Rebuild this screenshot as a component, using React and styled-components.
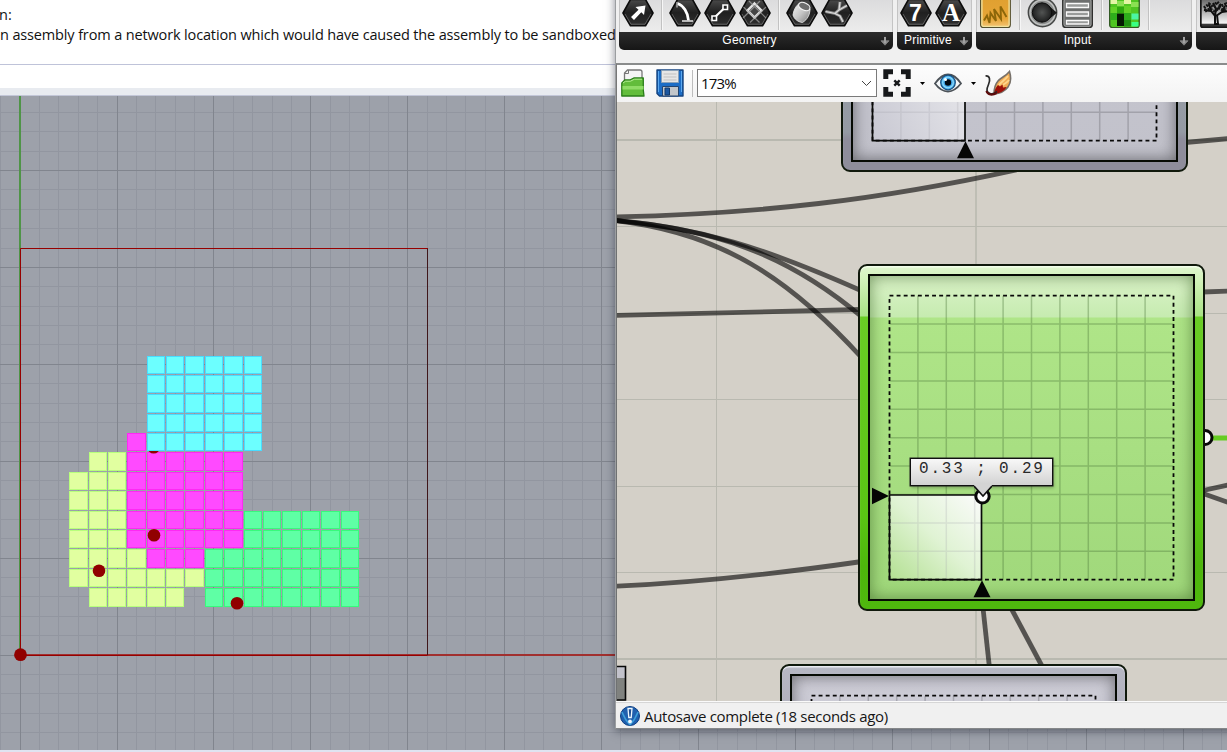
import React from "react";
import styled, { createGlobalStyle, css } from "styled-components";

const Global = createGlobalStyle`
  html, body { margin: 0; padding: 0; }
  body { width: 1227px; height: 752px; overflow: hidden; background: #e8ebf0; }
  svg { display: block; }
`;

const uiFont = css`
  font-family: "Open Sans", "Noto Sans", sans-serif;
`;

const Desktop = styled.div`
  position: relative;
  width: 1227px;
  height: 752px;
  overflow: hidden;
`;

/* ---------- modelling application in the back ---------- */

const Modeller = styled.div`
  display: flex;
  flex-direction: column;
  height: 752px;
`;

const History = styled.div`
  ${uiFont}
  box-sizing: border-box;
  height: 65px;
  padding-top: 5px;
  background: #fff;
  border-bottom: 1px solid #bfc3d9;
  color: #111;
  font-size: 14.5px;
  line-height: 20px;
`;

const HistoryLine = styled.div`
  white-space: nowrap;
  letter-spacing: ${(p) => p.$track || "0"};
  margin-left: ${(p) => p.$shift || "0"};
`;

const CommandLine = styled.div`
  height: 23px;
  background: #fff;
`;

const Splitter = styled.div`
  box-sizing: border-box;
  height: 8px;
  background: #e8ebf0;
  border-bottom: 1px solid #c3c7d8;
`;

const Viewport = styled.div`
  height: 654px;
  overflow: hidden;
  background: #9da1aa;
`;

const BottomEdge = styled.div`
  height: 2px;
  background: #dfe4f1;
`;

const ORIGIN_X = 20.2;
const ORIGIN_Y = 655;
const STEP = 19.38;
const VIEW_TOP = 96;

const colEdges = [69, 89, 108, 127, 147, 166, 185, 205, 224, 244, 263, 282, 302, 321, 341, 360];
const rowEdges = [356, 375, 394, 414, 433, 452, 472, 491, 511, 530, 549, 569, 588, 608];

const zones = [
  {
    fill: "#e1ffa0", edge: "#b8ff7c",
    runs: [[10, 4, 5], [9, 3, 5], [8, 3, 5], [7, 3, 5], [6, 3, 5], [5, 3, 6], [4, 3, 9], [3, 4, 8]],
  },
  {
    fill: "#ff4aff", edge: "#ff28f4",
    runs: [[11, 6, 6], [10, 6, 11], [9, 6, 11], [8, 6, 11], [7, 6, 11], [6, 6, 11], [5, 7, 9]],
  },
  {
    fill: "#5fffa5", edge: "#38fa7c",
    runs: [[7, 12, 17], [6, 12, 17], [5, 10, 17], [4, 10, 17], [3, 10, 17]],
  },
  {
    fill: "#6cffff", edge: "#48dcff",
    runs: [[15, 7, 12], [14, 7, 12], [13, 7, 12], [12, 7, 12], [11, 7, 12]],
  },
];

const range = (a, b) => Array.from({ length: b - a + 1 }, (_, k) => a + k);

function Zone({ fill, edge, runs }) {
  return (
    <g fill={fill} stroke={edge} strokeWidth="1">
      {runs.flatMap(([row, from, to]) =>
        range(from, to).map((col) => {
          const x = colEdges[col - 3];
          const y = rowEdges[15 - row];
          return (
            <rect
              key={row + "-" + col}
              x={x + 0.5}
              y={y + 0.5}
              width={colEdges[col - 2] - x - 2}
              height={rowEdges[16 - row] - y - 2}
            />
          );
        })
      )}
    </g>
  );
}

function Plan() {
  const gx = (k) => Math.floor(ORIGIN_X + STEP * k) + 0.5;
  const gy = (k) => Math.floor(ORIGIN_Y - STEP * k) + 0.5;
  const cols = range(-1, 62);
  const rows = range(-4, 28);
  const minor = (k) => k % 5 !== 0;
  const major = (k) => k % 5 === 0;
  const vline = (k) => `M${gx(k)} 96V750`;
  const hline = (k) => `M0 ${gy(k)}H1227`;
  return (
    <svg width="1227" height="654" viewBox={`0 ${VIEW_TOP} 1227 654`}>
      <path d={cols.filter(minor).map(vline).join("") + rows.filter(minor).map(hline).join("")} stroke="#9296a0" />
      <path d={cols.filter(major).map(vline).join("") + rows.filter(major).map(hline).join("")} stroke="#81858e" />
      <rect x="19" y="96" width="2" height="559" fill="#4f9447" />
      <rect x="20" y="654" width="620" height="2" fill="#a1302f" />
      <path d="M427.5 248V655" stroke="#5c0f12" />
      <path d="M427.5 248.500H20.500V655.500H427.500" fill="none" stroke="#960000" />
      <path d="M427.5 249V655" stroke="#2b1b20" strokeOpacity=".6" />
      {zones.slice(0, 3).map((z) => <Zone key={z.fill} {...z} />)}
      <circle cx="153.700" cy="447.300" r="6.300" fill="#910000" />
      <Zone {...zones[3]} />
      <g fill="#910000">
        <circle cx="20.500" cy="654.700" r="6.400" />
        <circle cx="154" cy="535.300" r="6.300" />
        <circle cx="99" cy="570.700" r="6.300" />
        <circle cx="237" cy="603.200" r="6.300" />
      </g>
    </svg>
  );
}

/* ---------- node editor window ---------- */

const EditorWindow = styled.div`
  position: absolute;
  left: 615px;
  top: -20px;
  box-sizing: border-box;
  width: 640px;
  height: 749px;
  border: 1px solid #858789;
  border-left-color: #9b9ea0;
  background: #f0f0f0;
  box-shadow: 0 2px 9px rgba(20, 25, 40, 0.5);
  display: flex;
  flex-direction: column;
`;

const Ribbon = styled.div`
  box-sizing: border-box;
  height: 82px;
  flex: none;
  padding: 0 0 0 3px;
  display: flex;
  gap: 4px;
`;

const Group = styled.div`
  width: ${(p) => p.$width}px;
  height: 69px;
  flex: none;
  display: flex;
  flex-direction: column;
  border-radius: 5px;
  overflow: hidden;
`;

const GroupBody = styled.div`
  box-sizing: border-box;
  height: 51px;
  padding: 17px 1px 0 ${(p) => p.$pad || 0}px;
  display: flex;
  background: linear-gradient(#d2d2d4, #ececec);
  border-left: 1px solid #c4c4c4;
  border-right: 1px solid #c4c4c4;
`;

const GroupLabel = styled.div`
  height: 18px;
  display: flex;
  align-items: center;
  justify-content: center;
  position: relative;
  background: linear-gradient(#2c2c2c, #161616);
  color: #fff;
  font: 12px/18px "Liberation Sans", Arial, sans-serif;
  letter-spacing: 0.2px;
  padding: 0 13px 2px 0;
  box-sizing: border-box;
`;

const Expand = styled.svg`
  position: absolute;
  right: 3px;
  top: 4px;
`;

const IconSlot = styled.div`
  width: 35px;
  flex: none;
  display: flex;
  justify-content: center;
`;

const Divider = styled.div`
  width: 12px;
  flex: none;
  display: flex;
  justify-content: center;
  &::before {
    content: "";
    width: 1px;
    height: 32px;
    background: #c2c2c2;
    box-shadow: 1px 0 #f6f6f6;
  }
`;

function Hex({ children }) {
  return (
    <svg width="32" height="30" viewBox="0 0 32 30">
      <defs>
        <linearGradient id="hexFill" x1="0" y1="0" x2="0" y2="1">
          <stop offset="0" stopColor="#4a4a4a" />
          <stop offset=".5" stopColor="#202020" />
          <stop offset="1" stopColor="#2f2f2f" />
        </linearGradient>
      </defs>
      <path d="M8.500 1.500h15L31 15l-7.500 12.800h-15L1 15z" fill="url(#hexFill)" stroke="#0c0c0c" strokeWidth="1.600" strokeLinejoin="round" />
      <path d="M3 16l6 10.200h14l6-10.200" fill="none" stroke="#777" strokeWidth=".7" />
      {children}
    </svg>
  );
}

const VectorIcon = () => (
  <Hex>
    <path d="M9 19l7.500-7.300-3-2.700L23.500 7.500 22 17l-2.700-2.800L12 22z" fill="#fff" />
  </Hex>
);
const ArcIcon = () => (
  <Hex>
    <path d="M8.500 5.500c6 2 10.500 9 11 17" fill="none" stroke="#fff" strokeWidth="2.800" />
    <path d="M13 23h11" stroke="#ddd" strokeWidth="1.600" />
    <path d="M8 4v5.500" stroke="#aaa" strokeWidth="1.500" />
  </Hex>
);
const LineIcon = () => (
  <Hex>
    <path d="M11 19l10-9.500" stroke="#fff" strokeWidth="2.200" />
    <path d="M8 18h4.500v4.500H8zM19 7h4.500v4.500H19z" fill="#222" stroke="#fff" strokeWidth="1.600" />
  </Hex>
);
const PatchIcon = () => (
  <Hex>
    <path d="M15.500 5.500l7 7-7 7-7-7z" fill="#444" stroke="#e4e4e4" strokeWidth="2.400" />
    <path d="M10 3l17 17M4.500 9l16 15.500M21 3L4 20M27 9L11 24.500" stroke="#aaa" strokeOpacity=".7" strokeWidth="1.200" />
  </Hex>
);
const BrepIcon = () => (
  <Hex>
    <defs>
      <linearGradient id="brepSide" x1="0" y1="0" x2="1" y2="1">
        <stop offset="0" stopColor="#f2f2f2" />
        <stop offset=".5" stopColor="#c6c6c6" />
        <stop offset="1" stopColor="#7c7c7c" />
      </linearGradient>
    </defs>
    <path d="M12.500 6C9 9 7.500 13 7 17c1 4 5 7 9.500 7.500 5-3 7.500-8 7.500-13.500z" fill="url(#brepSide)" stroke="#eee" strokeWidth=".8" />
    <ellipse cx="18.300" cy="8.500" rx="6" ry="3.600" transform="rotate(24 18.300 8.500)" fill="#6d6d6d" stroke="#f4f4f4" strokeWidth="1.200" />
  </Hex>
);
const MeshIcon = () => (
  <Hex>
    <path d="M4.500 13.500l9.500 2 4-3.500 1-8M18 12l8-4.500M14 15.500l5 2.500 3 6" fill="none" stroke="#8d8d8d" strokeWidth="3" />
    <path d="M4.500 13.500l9.500 2 4-3.500 1-8M18 12l8-4.500M14 15.500l5 2.500 3 6" fill="none" stroke="#dedede" strokeWidth="1.100" />
  </Hex>
);
const Glyph = styled.text`
  font: bold ${(p) => p.$size}px "${(p) => p.$face}", sans-serif;
  fill: #fff;
  text-anchor: middle;
`;

const TileSvg = (props) => <svg width="31" height="30" viewBox="0 0 31 30" {...props} />;

const GraphIcon = () => (
  <TileSvg>
    <defs>
      <linearGradient id="graphTile" x1="0" y1="0" x2="0" y2="1">
        <stop offset="0" stopColor="#e0a030" />
        <stop offset=".7" stopColor="#e6a537" />
        <stop offset="1" stopColor="#f5c678" />
      </linearGradient>
    </defs>
    <rect x=".7" y="0" width="29.500" height="29.600" rx="2.500" fill="url(#graphTile)" stroke="#55502f" strokeWidth="1.400" />
    <rect x="1.900" y="1" width="27.200" height="27.300" rx="1.500" fill="none" stroke="#f2e3a0" strokeWidth="1.300" />
    <path d="M4 22.500l3-5 2.500 7.500 1-10 5.500 8-2-12 7 10-.5-12.500 6 10.500" fill="none" stroke="#8c6609" strokeWidth="1.900" />
  </TileSvg>
);
const KnobIcon = () => (
  <TileSvg>
    <defs>
      <radialGradient id="knob">
        <stop offset="0" stopColor="#525453" />
        <stop offset="1" stopColor="#1e1f1f" />
      </radialGradient>
    </defs>
    <circle cx="15.500" cy="14.500" r="14.200" fill="#8d8f8e" stroke="#454746" strokeWidth="1.400" />
    <circle cx="15.500" cy="14.500" r="12.400" fill="none" stroke="#c2c4c3" strokeWidth="1.300" />
    <path d="M22 8l8 6.700-8 6.500z" fill="#191919" />
    <circle cx="15" cy="14.500" r="9.700" fill="url(#knob)" stroke="#0c0c0c" />
  </TileSvg>
);
const ListIcon = () => (
  <TileSvg>
    <rect x=".8" y="0" width="29.500" height="29.500" rx="3" fill="#6d6f6e" stroke="#2f302f" strokeWidth="1.500" />
    <rect x="2" y="1" width="27" height="27.300" rx="2" fill="none" stroke="#aeb0af" strokeWidth=".8" />
    <path d="M4.500 5.500h22v4h-22zM4.500 14h22v4h-22zM4.500 22.500h22v3.500h-22z" fill="#999b9a" stroke="#fafafa" strokeWidth="1.300" />
  </TileSvg>
);
const GeneIcon = () => (
  <TileSvg>
    <rect x=".7" y="0" width="29.500" height="29.600" rx="2.500" fill="#4fc522" stroke="#315a24" strokeWidth="1.400" />
    <path d="M1.500 2h6.500v4H1.500zM15 2h7v4h-7z" fill="#e4f5a6" />
    <path d="M8 3h7v5H8zM22 4h7.500v5H22z" fill="#8ae052" />
    <path d="M1.500 9H8v6H1.500zM15 8h7v7h-7z" fill="#63d228" />
    <path d="M8 9h7v6H8z" fill="#2fa90f" />
    <path d="M8 15.500h7V28H8z" fill="#061a03" />
    <path d="M1.500 15H8v7H1.500zM15 15h7v7h-7z" fill="#2eae1b" />
    <path d="M15 22h7v6.500h-7z" fill="#1e8f12" />
    <path d="M22.500 15.500h7v6h-7z" fill="#4bf5a4" />
    <path d="M22.500 24h7v4.500h-7z" fill="#39ff84" />
  </TileSvg>
);
const TreeIcon = () => (
  <TileSvg>
    <defs>
      <linearGradient id="treeSky" x1="0" y1="0" x2="0" y2="1">
        <stop offset="0" stopColor="#606060" />
        <stop offset=".85" stopColor="#f4f4f4" />
        <stop offset=".9" stopColor="#333" />
      </linearGradient>
    </defs>
    <rect x=".8" y="0" width="29.500" height="29.500" rx="2.500" fill="url(#treeSky)" stroke="#161616" strokeWidth="1.800" />
    <path d="M15 26V18l-4-5-7-1M11 13L9 6M15 18l1-7-3-6M16 13l5-6M16 18l6-4 6-1M22 14l3-6M14 26h4l-1-9" fill="none" stroke="#0e0e0e" strokeWidth="2" />
    <path d="M4 10l5-4 4 3 4-5 4 4 5-2 3 6M5 13l5-2 4 2 5-3 4 2 5-1" fill="none" stroke="#151515" strokeWidth="3" strokeDasharray="2 1" />
  </TileSvg>
);

function RibbonGroup({ width, pad, label, children }) {
  return (
    <Group $width={width}>
      <GroupBody $pad={pad}>{children}</GroupBody>
      <GroupLabel>
        {label}
        {label && (
          <Expand width="10" height="10" viewBox="0 0 10 10">
            <path d="M5 .8v5M1 4.800h8L5 9.200z" fill="#8c8c8c" stroke="#7b7b7b" strokeWidth="1" />
            <path d="M5 1v6" stroke="#a0a0a0" strokeWidth="2" />
          </Expand>
        )}
      </GroupLabel>
    </Group>
  );
}

/* ---------- canvas toolbar ---------- */

const Toolbar = styled.div`
  box-sizing: border-box;
  height: 39px;
  flex: none;
  padding: 3px 0 4px 4px;
  display: flex;
  align-items: center;
  border-top: 2px solid #8a8c8c;
  border-left: 1px solid #777;
  background: linear-gradient(#fdfdfd, #f3f3f3);
`;

const ToolIcon = styled.div`
  flex: none;
  margin-left: ${(p) => p.$gap || 0}px;
`;

const ToolDivider = styled.div`
  width: 1px;
  height: 27px;
  margin: 0 4px 0 8px;
  background: #bdbdbd;
`;

const ZoomBox = styled.div`
  ${uiFont}
  box-sizing: border-box;
  width: 180px;
  height: 28px;
  border: 1px solid #7a7a7a;
  background: #fff;
  padding: 0 4px 0 3px;
  display: flex;
  align-items: center;
  justify-content: space-between;
  font-size: 15px;
  letter-spacing: -0.85px;
  color: #0a0a0a;
`;

const Drop = () => (
  <svg width="5" height="3" viewBox="0 0 5 3"><path d="M0 0h5L2.500 3z" fill="#000" /></svg>
);

const OpenIcon = () => (
  <svg width="24" height="28" viewBox="0 0 24 28">
    <path d="M3.500 13V4l3-3h12.500q2 0 2 2v12z" fill="#f5f5f5" stroke="#777" strokeWidth="1.300" />
    <path d="M7.500 1v3.500H3.500" fill="none" stroke="#777" />
    <path d="M.8 27V14l3-3h5l4-2h9.500v12l.7 6z" fill="#62bd3b" stroke="#2a7d18" strokeWidth="1.300" strokeLinejoin="round" />
    <path d="M1.500 17h21v3.500h-21z" fill="#8fdc66" />
    <path d="M2 14l2.500-1.800h5l4-2H21" fill="none" stroke="#b4ee93" />
  </svg>
);
const SaveIcon = () => (
  <svg width="28" height="28" viewBox="0 0 28 28">
    <path d="M1 1h26v26H3.500L1 24.500z" fill="#1c6dc6" stroke="#15437f" strokeWidth="1.400" strokeLinejoin="round" />
    <path d="M2.500 2v21M25.500 2v21" stroke="#5ca8ee" />
    <path d="M5.500 1.500h17v12h-17z" fill="#e6e6e6" stroke="#8aa1b8" />
    <path d="M7.500 5h13M7.500 8h13M7.500 11h13" stroke="#c1c1c1" />
    <path d="M6.500 17.500h16V27h-16z" fill="#c2c6ca" stroke="#24456f" />
    <path d="M9 19h4.500v7H9z" fill="#1e58a0" stroke="#123a6c" />
  </svg>
);
const FocusIcon = () => (
  <svg width="28" height="28" viewBox="0 0 28 28">
    <path d="M2.800 10V2.800H10M18 2.800h7.200V10M25.200 18v7.200H18M10 25.200H2.800V18" fill="none" stroke="#17191b" strokeWidth="5" />
    <path d="M11.300 11.300l5.400 5.400M16.700 11.300l-5.400 5.400" stroke="#17191b" strokeWidth="2.400" />
  </svg>
);
const EyeIcon = () => (
  <svg width="28" height="20" viewBox="0 0 28 20">
    <path d="M1 10.500C6 3.500 10 1.500 14 1.500s9 3 13 9c-4 5-9 8-13 8S5 16 1 10.500z" fill="#f5f8fa" stroke="#4c5258" strokeWidth="1.800" />
    <circle cx="14" cy="9.500" r="7.300" fill="#42a6e9" stroke="#174d7c" strokeWidth="1.200" />
    <circle cx="14" cy="9.500" r="5.300" fill="none" stroke="#8ddcfb" strokeWidth="1.200" />
    <circle cx="14" cy="9.500" r="3.200" fill="#020a12" />
    <circle cx="11.500" cy="6.500" r="1.500" fill="#fff" />
  </svg>
);
const BrushIcon = () => (
  <svg width="28" height="28" viewBox="0 0 28 28">
    <path d="M25.500 2.500c1.500 5 1.800 11-1.500 15.500-3 4-8 6.500-14 7 0-6 1-9.500 4-13 3-3.500 8-5 11.500-9.500z" fill="#f2ad55" stroke="#77716a" strokeWidth="1.600" />
    <path d="M24 7c-3 4-7 6-9 9M25 11c-2 3-4 3-6 5" stroke="#ffd68c" strokeWidth="1.800" fill="none" />
    <path d="M10 25c.5-4 2-7 4-9l2 1.500 2.500-2 .5 3 3.500-.5c-1 3-5 6-12.500 7z" fill="#9c1009" />
    <path d="M1.500 7c4.500-.5 5 4 3 8.500s-2.500 8 1.500 9 5-.5 7-2" fill="none" stroke="#2a2a2a" strokeWidth="1.700" />
    <path d="M2.500 22c1 4 6 4.500 10 2" fill="none" stroke="#5d0b0b" strokeWidth="2.200" />
  </svg>
);

/* ---------- canvas ---------- */

const Canvas = styled.div`
  position: relative;
  height: 599px;
  flex: none;
  overflow: hidden;
  border-left: 1px solid #6f7172;
  background: #d4d0c8;
`;

const Wires = styled.svg`
  position: absolute;
  left: 0;
  top: 0;
`;

const palettes = {
  green: {
    rim: "linear-gradient(#e0f6d0 0, #d2f2ba 14px, #a9e285 50px, #69cc25 51px, #5ac414 250px, #4db60c 300px, #4fb70e)",
    face: "linear-gradient(#dcf4ca 0, #c6ebb0 41px, #afe588 42px, #a0d87b)",
    shade: "rgba(52,92,30,.62)",
    gloss: "#f4ffec",
  },
  gray: {
    rim: "linear-gradient(#b6b7c3 0, #b2b2be 45px, #989ea6 200px, #949aa3 305px, #8e8d9b 312px)",
    face: "linear-gradient(#cfced8 0, #c8c8d2 50px, #c2c2cb)",
    shade: "rgba(50,50,55,.65)",
    gloss: "#eeeef4",
  },
};

const Node = styled.div`
  position: absolute;
  left: ${(p) => p.$x - 617}px;
  top: ${(p) => p.$y - 102}px;
  box-sizing: border-box;
  width: 347px;
  height: 347px;
  padding: 8px;
  border: 2px solid #10190c;
  border-radius: 9px;
  background: ${(p) => palettes[p.$tone].rim};
  box-shadow: inset 0 2px 1px -0.500px ${(p) => palettes[p.$tone].gloss};
`;

const Face = styled.div`
  box-sizing: border-box;
  width: 327px;
  height: 327px;
  border: 2px solid #060a04;
  background: ${(p) => palettes[p.$tone].face};
  box-shadow: inset 0 0 16px ${(p) => palettes[p.$tone].shade};
`;

/* Slider pad: 284px square, ten divisions each way. */
function Pad({ tone, vx, vy, knob }) {
  const x0 = 19.5;
  const y0 = 19.7;
  const size = 284;
  const px = x0 + vx;
  const py = y0 + size - vy;
  const lines = range(1, 9).map((k) => {
    const d = k * 28.4;
    return `M${x0 + d} ${y0}v${size}M${x0} ${y0 + d}h${size}`;
  });
  const green = tone === "green";
  return (
    <svg width="323" height="323" viewBox="0 0 323 323">
      <defs>
        <linearGradient id={"fill-" + tone} x1="0" y1="1" x2="1" y2="0">
          <stop offset="0" stopColor={green ? "#b3e092" : "#c8c8d2"} />
          <stop offset=".5" stopColor={green ? "#e0f3d4" : "#dedee4"} />
          <stop offset="1" stopColor={green ? "#fbfbfb" : "#f4f4f4"} />
        </linearGradient>
      </defs>
      <path d={lines.join("")} stroke={green ? "#4c7438" : "#707078"} strokeOpacity={green ? ".36" : ".4"} strokeWidth="1.500" />
      {vx > 0 && (
        <>
          <rect x={x0} y={py} width={vx} height={vy} fill={`url(#fill-${tone})`} />
          <path
            d={[1, 2, 3].map((k) => `M${x0 + k * 28.4} ${py}V${y0 + size}`).join("") +
              range(1, 9).filter((k) => k * 28.4 < vy).map((k) => `M${x0} ${y0 + size - k * 28.4}h${vx}`).join("")}
            stroke="#9999a4"
            strokeOpacity=".22"
            strokeWidth="1.500"
          />
          <path d={`M${x0} ${py}H${px}V${y0 + size}H${x0}z`} fill="none" stroke="#080a08" strokeWidth="1.700" />
          <path d={`M${px + 0.5} ${y0 + size + 0.5}l8.500 17h-17z`} fill="#050505" />
          <path d={`M${x0 - 0.5} ${py + 1}l-17-8.300v16.600z`} fill="#050505" />
        </>
      )}
      <rect x={x0} y={y0} width={size} height={size} fill="none" stroke="#080808" strokeWidth="1.800" strokeDasharray="3.900 3.200" />
      {knob && <circle cx={px + 1} cy={py + 1.3} r="6.700" fill="#fff" stroke="#080808" strokeWidth="3" />}
    </svg>
  );
}

const Tooltip = styled.div`
  position: absolute;
  left: 293px;
  top: 356px;
  box-sizing: border-box;
  width: 143px;
  height: 28px;
  border: 1.500px solid #111;
  background: linear-gradient(#f8f8f8, #d2d2d2);
  box-shadow: 0 0 0 0.500px #222, 1px 2px 3px rgba(0, 0, 0, 0.25);
  font: 16px/21px "Liberation Mono", "Courier New", monospace;
  letter-spacing: 1.830px;
  padding-left: 8px;
  color: #2a2a2a;
  white-space: pre;
`;

const Tail = styled.svg`
  position: absolute;
  left: 62.500px;
  top: 24.500px;
`;

const StatusBar = styled.div`
  ${uiFont}
  box-sizing: border-box;
  height: 26px;
  flex: none;
  display: flex;
  align-items: center;
  gap: 4px;
  padding: 3px 0 0 4px;
  border-top: 1px solid #fafafa;
  box-shadow: inset 0 1px #d6d6d6;
  font-size: 15px;
  color: #151515;
  letter-spacing: -0.300px;
  white-space: nowrap;
`;

const InfoIcon = () => (
  <svg width="20" height="20" viewBox="0 0 20 20">
    <circle cx="10" cy="10" r="9.500" fill="#2060ae" stroke="#0c3e83" />
    <path d="M2 6c2 5 3 8 8 13M18 6c-2 5-3 8-8 13" stroke="#3ea0db" strokeWidth="1.500" fill="none" />
    <path d="M8 2.500h4l-.8 9H8.800z" fill="#205092" stroke="#eef8ff" strokeWidth="1.300" />
    <circle cx="10" cy="15.500" r="1.900" fill="#eef8ff" />
  </svg>
);

function CanvasContent() {
  return (
    <Canvas>
      <Wires width="612" height="599" viewBox="617 102 612 599" fill="none">
        <path d="M617 140H1229M617 659H1229" stroke="#b9b9b0" strokeWidth="2" />
        <path d="M617 226.500H1229M617 313.500H1229M617 399.500H1229M617 486.500H1229M617 572.500H1229M716.500 102V701" stroke="#b9b9b0" />
        <path d="M976 102V701" stroke="#b9b9b0" strokeWidth="1.600" />
        <g stroke="#000" strokeOpacity=".6" strokeWidth="4.800">
          <path d="M610 217C760 214 880 200 1020 169" />
          <path d="M610 220C700 227 765 248 862 291" />
          <path d="M610 220C710 228 785 252 862 317" />
          <path d="M610 220C720 231 790 279 862 358" />
          <path d="M610 315.500L862 309.500" />
          <path d="M610 586.500C690 583 775 574 862 561.500" />
          <path d="M1185 142.500L1230 138.500" />
          <path d="M1203 292L1230 291" />
          <path d="M1203 490.500L1230 484.500" />
          <path d="M1203 493.500L1230 503" />
          <path d="M983 608L989.500 668" />
          <path d="M1011 608L1043 668" />
        </g>
        <path d="M1210 438H1230" stroke="#66cc22" strokeWidth="5" />
        <circle cx="1205" cy="437.500" r="7" fill="#fff" stroke="#080808" strokeWidth="3" />
        <path d="M610 666.500h15.500v34h-15.500z" fill="#80827f" />
        <path d="M610 667h15v11h-15z" fill="#c2c2cb" />
        <path d="M610 666.500h15.500v33.500h-15.500" stroke="#080808" strokeWidth="1.600" />
      </Wires>
      <Node $x={841} $y={-175} $tone="gray">
        <Face $tone="gray"><Pad tone="gray" vx={92.5} vy={180} /></Face>
      </Node>
      <Node $x={858} $y={264} $tone="green">
        <Face $tone="green"><Pad tone="green" vx={92} vy={84.7} knob /></Face>
      </Node>
      <Node $x={780} $y={664} $tone="gray">
        <Face $tone="gray"><Pad tone="gray" vx={0} vy={0} /></Face>
      </Node>
      <Tooltip>
        0.33 ; 0.29
        <Tail width="18" height="14" viewBox="0 0 18 14">
          <path d="M0 0h18v2L9 12 0 2z" fill="#d4d4d4" />
          <path d="M0 2L9 12l9-10" fill="none" stroke="#111" strokeWidth="1.600" />
        </Tail>
      </Tooltip>
    </Canvas>
  );
}

const slot = (icon) => <IconSlot>{icon}</IconSlot>;

export default function App() {
  return (
    <Desktop>
      <Global />
      <Modeller>
        <History>
          <HistoryLine $shift="-1px">n:</HistoryLine>
          <HistoryLine $track="-0.14px">n assembly from a network location which would have caused the assembly to be sandboxed</HistoryLine>
        </History>
        <CommandLine />
        <Splitter />
        <Viewport><Plan /></Viewport>
        <BottomEdge />
      </Modeller>
      <EditorWindow>
        <Ribbon>
          <RibbonGroup width={274} label="Geometry">
            {slot(<VectorIcon />)}
            <Divider />
            {slot(<ArcIcon />)}
            {slot(<LineIcon />)}
            {slot(<PatchIcon />)}
            <Divider />
            {slot(<BrepIcon />)}
            {slot(<MeshIcon />)}
          </RibbonGroup>
          <RibbonGroup width={75} label="Primitive">
            {slot(<Hex><Glyph x="15.500" y="23" $size={23} $face="Liberation Sans">7</Glyph></Hex>)}
            {slot(<Hex><Glyph x="16" y="22.500" $size={25} $face="Liberation Serif">A</Glyph></Hex>)}
          </RibbonGroup>
          <RibbonGroup width={216} pad={1} label="Input">
            {slot(<GraphIcon />)}
            <Divider />
            {slot(<KnobIcon />)}
            {slot(<ListIcon />)}
            <Divider />
            {slot(<GeneIcon />)}
            <Divider />
          </RibbonGroup>
          <RibbonGroup width={80} pad={1}>
            {slot(<TreeIcon />)}
          </RibbonGroup>
        </Ribbon>
        <Toolbar>
          <ToolIcon><OpenIcon /></ToolIcon>
          <ToolIcon $gap={11}><SaveIcon /></ToolIcon>
          <ToolDivider />
          <ZoomBox>
            173%
            <svg width="11" height="7" viewBox="0 0 11 7"><path d="M1 1l4.500 4.500L10 1" fill="none" stroke="#444" /></svg>
          </ZoomBox>
          <ToolIcon $gap={6}><FocusIcon /></ToolIcon>
          <ToolIcon $gap={9}><Drop /></ToolIcon>
          <ToolIcon $gap={9}><EyeIcon /></ToolIcon>
          <ToolIcon $gap={9}><Drop /></ToolIcon>
          <ToolIcon $gap={8}><BrushIcon /></ToolIcon>
        </Toolbar>
        <CanvasContent />
        <StatusBar>
          <InfoIcon />
          Autosave complete (18 seconds ago)
        </StatusBar>
      </EditorWindow>
    </Desktop>
  );
}
